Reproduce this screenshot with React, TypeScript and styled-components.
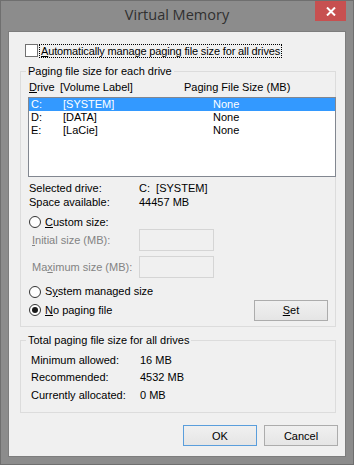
import React from 'react';
import styled, { createGlobalStyle } from 'styled-components';

const GlobalStyle = createGlobalStyle`
  html, body {
    margin: 0;
    padding: 0;
  }
  body {
    width: 354px;
    height: 465px;
    overflow: hidden;
    background: #8b8b8b;
    font-family: "Liberation Sans", Arial, sans-serif;
    font-size: 11px;
    color: #000;
  }
`;

type Drive = {
  letter: string;
  label: string;
  size: string;
  selected?: boolean;
};

const DRIVES: Drive[] = [
  { letter: 'C:', label: '[SYSTEM]', size: 'None', selected: true },
  { letter: 'D:', label: '[DATA]', size: 'None' },
  { letter: 'E:', label: '[LaCie]', size: 'None' },
];

const TOTALS = [
  { label: 'Minimum allowed:', value: '16 MB' },
  { label: 'Recommended:', value: '4532 MB' },
  { label: 'Currently allocated:', value: '0 MB' },
];

const Window = styled.div`
  box-sizing: border-box;
  width: 354px;
  height: 465px;
  display: flex;
  flex-direction: column;
  padding: 0 7px 7px 7px;
  background: #8c8c8c;
  border: 1px solid #6f6f6f;
`;

const TitleBar = styled.div`
  height: 30px;
  display: grid;
  grid-template-columns: 1fr auto 1fr;
  align-items: start;
`;

const Title = styled.div`
  grid-column: 2;
  font-family: "Open Sans", "Noto Sans", sans-serif;
  font-size: 14.5px;
  line-height: 28px;
  color: #303030;
`;

const CloseButton = styled.div`
  grid-column: 3;
  justify-self: end;
  width: 31px;
  height: 20px;
  background: #c75050;
  display: flex;
  align-items: center;
  justify-content: center;
`;

const Client = styled.div`
  flex: 1;
  box-sizing: border-box;
  display: flex;
  flex-direction: column;
  padding: 12px 9px 10px 11px;
  background: #f0f0f0;
  border: 1px solid #7d7d7d;
`;

const CheckRow = styled.div`
  height: 14px;
  margin-left: 5px;
  display: flex;
  align-items: center;
`;

const CheckBox = styled.div`
  box-sizing: border-box;
  width: 13px;
  height: 13px;
  background: #fff;
  border: 1px solid #707070;
`;

const FocusLabel = styled.span`
  margin-left: 2px;
  padding: 0 1px;
  line-height: 12px;
  letter-spacing: -0.14px;
  outline: 1px dotted #000;
  outline-offset: 0;
`;

const Group = styled.fieldset<{ $bottom: number }>`
  margin: 7px 0 0 0;
  padding: 0 7px ${({ $bottom }) => $bottom}px 7px;
  border: 1px solid #dcdcdc;
  min-width: 0;
  display: flex;
  flex-direction: column;
`;

const Legend = styled.legend`
  margin-left: -2px;
  padding: 0 2px;
  line-height: 13px;
`;

const Key = styled.span`
  text-decoration: underline;
  text-underline-offset: 1px;
`;

const HeaderRow = styled.div`
  margin-top: 3px;
  padding-left: 1px;
  height: 13px;
  line-height: 13px;
  display: grid;
  grid-template-columns: 31px 124px 1fr;
`;

const ListBox = styled.div`
  box-sizing: border-box;
  margin: 3px -8px 0 0;
  height: 80px;
  background: #fff;
  border: 1px solid #828790;
`;

const ListRow = styled.div<{ $selected?: boolean }>`
  height: 13px;
  line-height: 13px;
  padding-left: 2px;
  display: grid;
  grid-template-columns: 32px 150px 1fr;
  background: ${({ $selected }) => ($selected ? '#3399ff' : 'transparent')};
  color: ${({ $selected }) => ($selected ? '#fff' : '#000')};
`;

const InfoRow = styled.div<{ $top?: number }>`
  margin-top: ${({ $top }) => $top ?? 0}px;
  padding-left: 1px;
  height: 14px;
  line-height: 14px;
  display: grid;
  grid-template-columns: 110px 1fr;
`;

const RadioRow = styled.div<{ $top: number; $height: number }>`
  margin-top: ${({ $top }) => $top}px;
  height: ${({ $height }) => $height}px;
  padding-left: 1px;
  display: flex;
  align-items: center;
`;

const Radio = styled.div<{ $checked?: boolean }>`
  box-sizing: border-box;
  width: 12px;
  height: 12px;
  border-radius: 50%;
  border: 1px solid #333;
  background: #fff;
  display: flex;
  align-items: center;
  justify-content: center;

  &::after {
    content: '';
    display: ${({ $checked }) => ($checked ? 'block' : 'none')};
    width: 6px;
    height: 6px;
    border-radius: 50%;
    background: #1a1a1a;
  }
`;

const RadioLabel = styled.span`
  margin-left: 4px;
  line-height: 13px;
`;

const Spacer = styled.div`
  flex: 1;
`;

const SizeRow = styled.div<{ $top: number }>`
  margin-top: ${({ $top }) => $top}px;
  height: 22px;
  display: grid;
  grid-template-columns: 111px 75px;
  align-items: center;
`;

const DisabledLabel = styled.span`
  padding-left: 4px;
  color: #838383;
`;

const DisabledInput = styled.div`
  box-sizing: border-box;
  height: 22px;
  background: #f0f0f0;
  border: 1px solid #d5d5d5;
`;

const Button = styled.div<{ $default?: boolean }>`
  box-sizing: border-box;
  width: 74px;
  height: 21px;
  display: flex;
  align-items: center;
  justify-content: center;
  background: linear-gradient(#f0f0f0, #e5e5e5);
  border: 1px solid ${({ $default }) => ($default ? '#5a9edc' : '#acacac')};
`;

const TotalRow = styled.div`
  padding-left: 3px;
  height: 17.5px;
  line-height: 17.5px;
  display: grid;
  grid-template-columns: 109px 1fr;
`;

const TotalsBody = styled.div`
  margin-top: 5px;
  display: flex;
  flex-direction: column;
`;

const ButtonBar = styled.div`
  margin: 12px -2px 0 0;
  display: flex;
  justify-content: flex-end;
  gap: 7px;
`;

function CloseIcon() {
  return (
    <svg width="10" height="9" viewBox="0 0 10 9">
      <path d="M1 0.5 L9 8.5 M9 0.5 L1 8.5" stroke="#fff" strokeWidth="2" fill="none" />
    </svg>
  );
}

export default function App() {
  return (
    <>
      <GlobalStyle />
      <Window>
        <TitleBar>
          <Title>Virtual Memory</Title>
          <CloseButton>
            <CloseIcon />
          </CloseButton>
        </TitleBar>
        <Client>
          <CheckRow>
            <CheckBox />
            <FocusLabel>
              <Key>A</Key>utomatically manage paging file size for all drives
            </FocusLabel>
          </CheckRow>

          <Group $bottom={5}>
            <Legend>Paging file size for each drive</Legend>
            <HeaderRow>
              <span>
                <Key>D</Key>rive
              </span>
              <span>[Volume Label]</span>
              <span>Paging File Size (MB)</span>
            </HeaderRow>
            <ListBox>
              {DRIVES.map((d) => (
                <ListRow key={d.letter} $selected={d.selected}>
                  <span>{d.letter}</span>
                  <span>{d.label}</span>
                  <span>{d.size}</span>
                </ListRow>
              ))}
            </ListBox>
            <InfoRow $top={4}>
              <span>Selected drive:</span>
              <span>C:&nbsp; [SYSTEM]</span>
            </InfoRow>
            <InfoRow>
              <span>Space available:</span>
              <span>44457 MB</span>
            </InfoRow>

            <RadioRow $top={7} $height={13}>
              <Radio />
              <RadioLabel>
                <Key>C</Key>ustom size:
              </RadioLabel>
            </RadioRow>
            <SizeRow $top={0}>
              <DisabledLabel>
                <Key>I</Key>nitial size (MB):
              </DisabledLabel>
              <DisabledInput />
            </SizeRow>
            <SizeRow $top={5}>
              <DisabledLabel>
                Ma<Key>x</Key>imum size (MB):
              </DisabledLabel>
              <DisabledInput />
            </SizeRow>
            <RadioRow $top={7} $height={14}>
              <Radio />
              <RadioLabel>
                S<Key>y</Key>stem managed size
              </RadioLabel>
            </RadioRow>
            <RadioRow $top={1} $height={21}>
              <Radio $checked />
              <RadioLabel>
                <Key>N</Key>o paging file
              </RadioLabel>
              <Spacer />
              <Button>
                <span>
                  <Key>S</Key>et
                </span>
              </Button>
            </RadioRow>
          </Group>

          <Group $bottom={8}>
            <Legend>Total paging file size for all drives</Legend>
            <TotalsBody>
              {TOTALS.map((t) => (
                <TotalRow key={t.label}>
                  <span>{t.label}</span>
                  <span>{t.value}</span>
                </TotalRow>
              ))}
            </TotalsBody>
          </Group>

          <ButtonBar>
            <Button $default>OK</Button>
            <Button>Cancel</Button>
          </ButtonBar>
        </Client>
      </Window>
    </>
  );
}
